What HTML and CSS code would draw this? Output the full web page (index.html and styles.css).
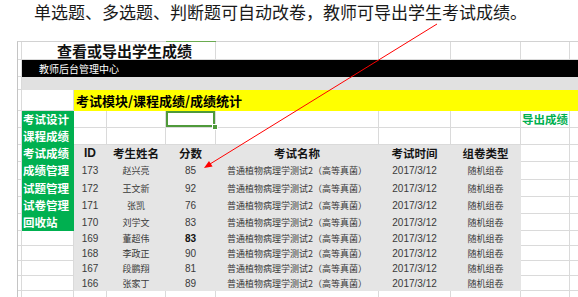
FILE: index.html
```html
<!DOCTYPE html>
<html lang="zh-CN">
<head>
    <meta charset="UTF-8">
    <meta name="viewport" content="width=device-width, initial-scale=1.0">
    <title>查看或导出学生成绩</title>
    <link rel="stylesheet" href="styles.css">
</head>
<body>
    <div class="note">单选题、多选题、判断题可自动改卷，教师可导出学生考试成绩。</div>

    <table class="sheet">
        <colgroup>
            <col class="c0"><col class="ca"><col class="cb"><col class="cc"><col class="cd">
            <col class="ce"><col class="cf"><col class="cg"><col class="ch"><col class="ci">
        </colgroup>
        <tr class="r18">
            <td></td>
            <td colspan="4" class="title">查看或导出学生成绩</td>
            <td></td><td></td><td></td><td></td><td></td>
        </tr>
        <tr class="r17">
            <td></td>
            <td colspan="9" class="topbar">教师后台管理中心</td>
        </tr>
        <tr class="r13">
            <td></td>
            <td colspan="9" class="band"></td>
        </tr>
        <tr class="r21">
            <td></td><td></td>
            <td colspan="8" class="crumb">考试模块/课程成绩/成绩统计</td>
        </tr>
        <tr class="r17">
            <td></td>
            <td class="menu">考试设计</td>
            <td></td><td></td><td class="picked"></td><td></td><td></td><td></td>
            <td class="export">导出成绩</td><td></td>
        </tr>
        <tr class="r17">
            <td></td>
            <td class="menu">课程成绩</td>
            <td></td><td></td><td></td><td></td><td></td><td></td><td></td><td></td>
        </tr>
        <tr class="r17">
            <td></td>
            <td class="menu">考试成绩</td>
            <td class="head num">ID</td>
            <td class="head">考生姓名</td>
            <td class="head">分数</td>
            <td class="head">考试名称</td>
            <td class="head">考试时间</td>
            <td class="head">组卷类型</td>
            <td></td><td></td>
        </tr>
        <tr class="r18">
            <td></td><td class="menu">成绩管理</td>
            <td class="cell num">173</td><td class="cell zh">赵兴亮</td><td class="cell num">85</td>
            <td class="cell zh">普通植物病理学测试2（高等真菌）</td><td class="cell num">2017/3/12</td><td class="cell zh">随机组卷</td>
            <td></td><td></td>
        </tr>
        <tr class="r17">
            <td></td><td class="menu">试题管理</td>
            <td class="cell num">172</td><td class="cell zh">王文新</td><td class="cell num">92</td>
            <td class="cell zh">普通植物病理学测试2（高等真菌）</td><td class="cell num">2017/3/12</td><td class="cell zh">随机组卷</td>
            <td></td><td></td>
        </tr>
        <tr class="r17">
            <td></td><td class="menu">试卷管理</td>
            <td class="cell num">171</td><td class="cell zh">张凯</td><td class="cell num">76</td>
            <td class="cell zh">普通植物病理学测试2（高等真菌）</td><td class="cell num">2017/3/12</td><td class="cell zh">随机组卷</td>
            <td></td><td></td>
        </tr>
        <tr class="r17">
            <td></td><td class="menu">回收站</td>
            <td class="cell num">170</td><td class="cell zh">刘学文</td><td class="cell num">83</td>
            <td class="cell zh">普通植物病理学测试2（高等真菌）</td><td class="cell num">2017/3/12</td><td class="cell zh">随机组卷</td>
            <td></td><td></td>
        </tr>
        <tr class="r15">
            <td></td><td></td>
            <td class="cell num">169</td><td class="cell zh">董超伟</td><td class="cell num strong">83</td>
            <td class="cell zh">普通植物病理学测试2（高等真菌）</td><td class="cell num">2017/3/12</td><td class="cell zh">随机组卷</td>
            <td></td><td></td>
        </tr>
        <tr class="r15">
            <td></td><td></td>
            <td class="cell num">168</td><td class="cell zh">李政正</td><td class="cell num">90</td>
            <td class="cell zh">普通植物病理学测试2（高等真菌）</td><td class="cell num">2017/3/12</td><td class="cell zh">随机组卷</td>
            <td></td><td></td>
        </tr>
        <tr class="r15">
            <td></td><td></td>
            <td class="cell num">167</td><td class="cell zh">段鹏翔</td><td class="cell num">81</td>
            <td class="cell zh">普通植物病理学测试2（高等真菌）</td><td class="cell num">2017/3/12</td><td class="cell zh">随机组卷</td>
            <td></td><td></td>
        </tr>
        <tr class="r15">
            <td></td><td></td>
            <td class="cell num">166</td><td class="cell zh">张家丁</td><td class="cell num">89</td>
            <td class="cell zh">普通植物病理学测试2（高等真菌）</td><td class="cell num">2017/3/12</td><td class="cell zh">随机组卷</td>
            <td></td><td></td>
        </tr>
        <tr class="r18">
            <td></td><td></td><td></td><td></td><td></td><td></td><td></td><td></td><td></td><td></td>
        </tr>
    </table>

    <svg class="arrow" width="578" height="297" viewBox="0 0 578 297">
        <line x1="437" y1="24" x2="210" y2="164" stroke="#ff0000" stroke-width="1"/>
        <polygon points="204,168 212.6,166.5 209,160.9" fill="#ff0000"/>
    </svg>
</body>
</html>
```

FILE: styles.css
```css
body {
    margin: 0;
    background-color: #fff;
    overflow: hidden;
    font-family: "Noto Sans CJK SC", sans-serif;
    position: relative;
    height: 297px;
}

.note {
    height: 41px;
    padding-left: 34px;
    font-size: 17px;
    line-height: 24px;
    color: #1a1a1a;
    white-space: nowrap;
}

.sheet {
    margin-left: 17px;
    width: 573px;
    table-layout: fixed;
    border-collapse: separate;
    border-spacing: 0;
    border-top: 1px solid #d2d2d2;
    border-left: 1px solid #c4c4c4;
}

.c0 { width: 4px; }
.ca { width: 52px; }
.cb { width: 33px; }
.cc { width: 59px; }
.cd { width: 50px; }
.ce { width: 163px; }
.cf { width: 72px; }
.cg { width: 70px; }
.ch { width: 49px; }
.ci { width: 21px; }

.r13 { height: 13px; }
.r15 { height: 15px; }
.r17 { height: 17px; }
.r18 { height: 18px; }
.r21 { height: 21px; }

td {
    padding: 0;
    border-right: 1px solid #dadada;
    border-bottom: 1px solid #dadada;
    line-height: 13px;
    white-space: nowrap;
    overflow: hidden;
    vertical-align: middle;
}

.title {
    position: relative;
    overflow: visible;
    text-align: center;
    padding-left: 12px;
    font-size: 15px;
    font-weight: bold;
    color: #111;
}

/* column highlight above the picked cell */
.title::before {
    content: "";
    position: absolute;
    left: 144px;
    top: -1px;
    width: 50px;
    height: 1px;
    background-color: #6aab50;
}

.topbar {
    background-color: #000;
    border-color: #000;
    color: #fff;
    font-size: 10px;
    padding-left: 17px;
}

.band {
    background-color: #e1e1e1;
    border-color: #e1e1e1;
}

.crumb {
    background-color: #ffff00;
    border-color: #ffff00;
    font-size: 13px;
    font-weight: bold;
    padding-left: 2px;
    color: #000;
}

.menu {
    background-color: #00b050;
    border-color: #00b050;
    color: #fff;
    font-size: 11.5px;
    font-weight: bold;
    padding-left: 1px;
}

.picked {
    position: relative;
    overflow: visible;
    box-shadow: inset 0 0 0 2px #4f9a3a;
}

.picked::after {
    content: "";
    position: absolute;
    right: -3px;
    bottom: -3px;
    width: 4px;
    height: 4px;
    background-color: #4f9a3a;
    border: 1px solid #fff;
}

.export {
    color: #00b050;
    font-size: 11.5px;
    font-weight: bold;
    padding-left: 1px;
}

.head,
.cell {
    background-color: #e5e5e5;
    border-color: #e5e5e5;
    text-align: center;
}

.head {
    font-size: 11.5px;
    font-weight: bold;
    color: #151515;
}

.head.num {
    font-family: "Liberation Sans", "Noto Sans CJK SC", sans-serif;
    font-size: 12px;
}

.cell {
    color: #3a3a3a;
}

.cell.zh {
    font-size: 9px;
}

.cell.num {
    font-family: "Liberation Sans", "Noto Sans CJK SC", sans-serif;
    font-size: 10px;
}

.strong {
    font-weight: bold;
    color: #111;
}

.arrow {
    position: absolute;
    left: 0;
    top: 0;
    pointer-events: none;
}
```
